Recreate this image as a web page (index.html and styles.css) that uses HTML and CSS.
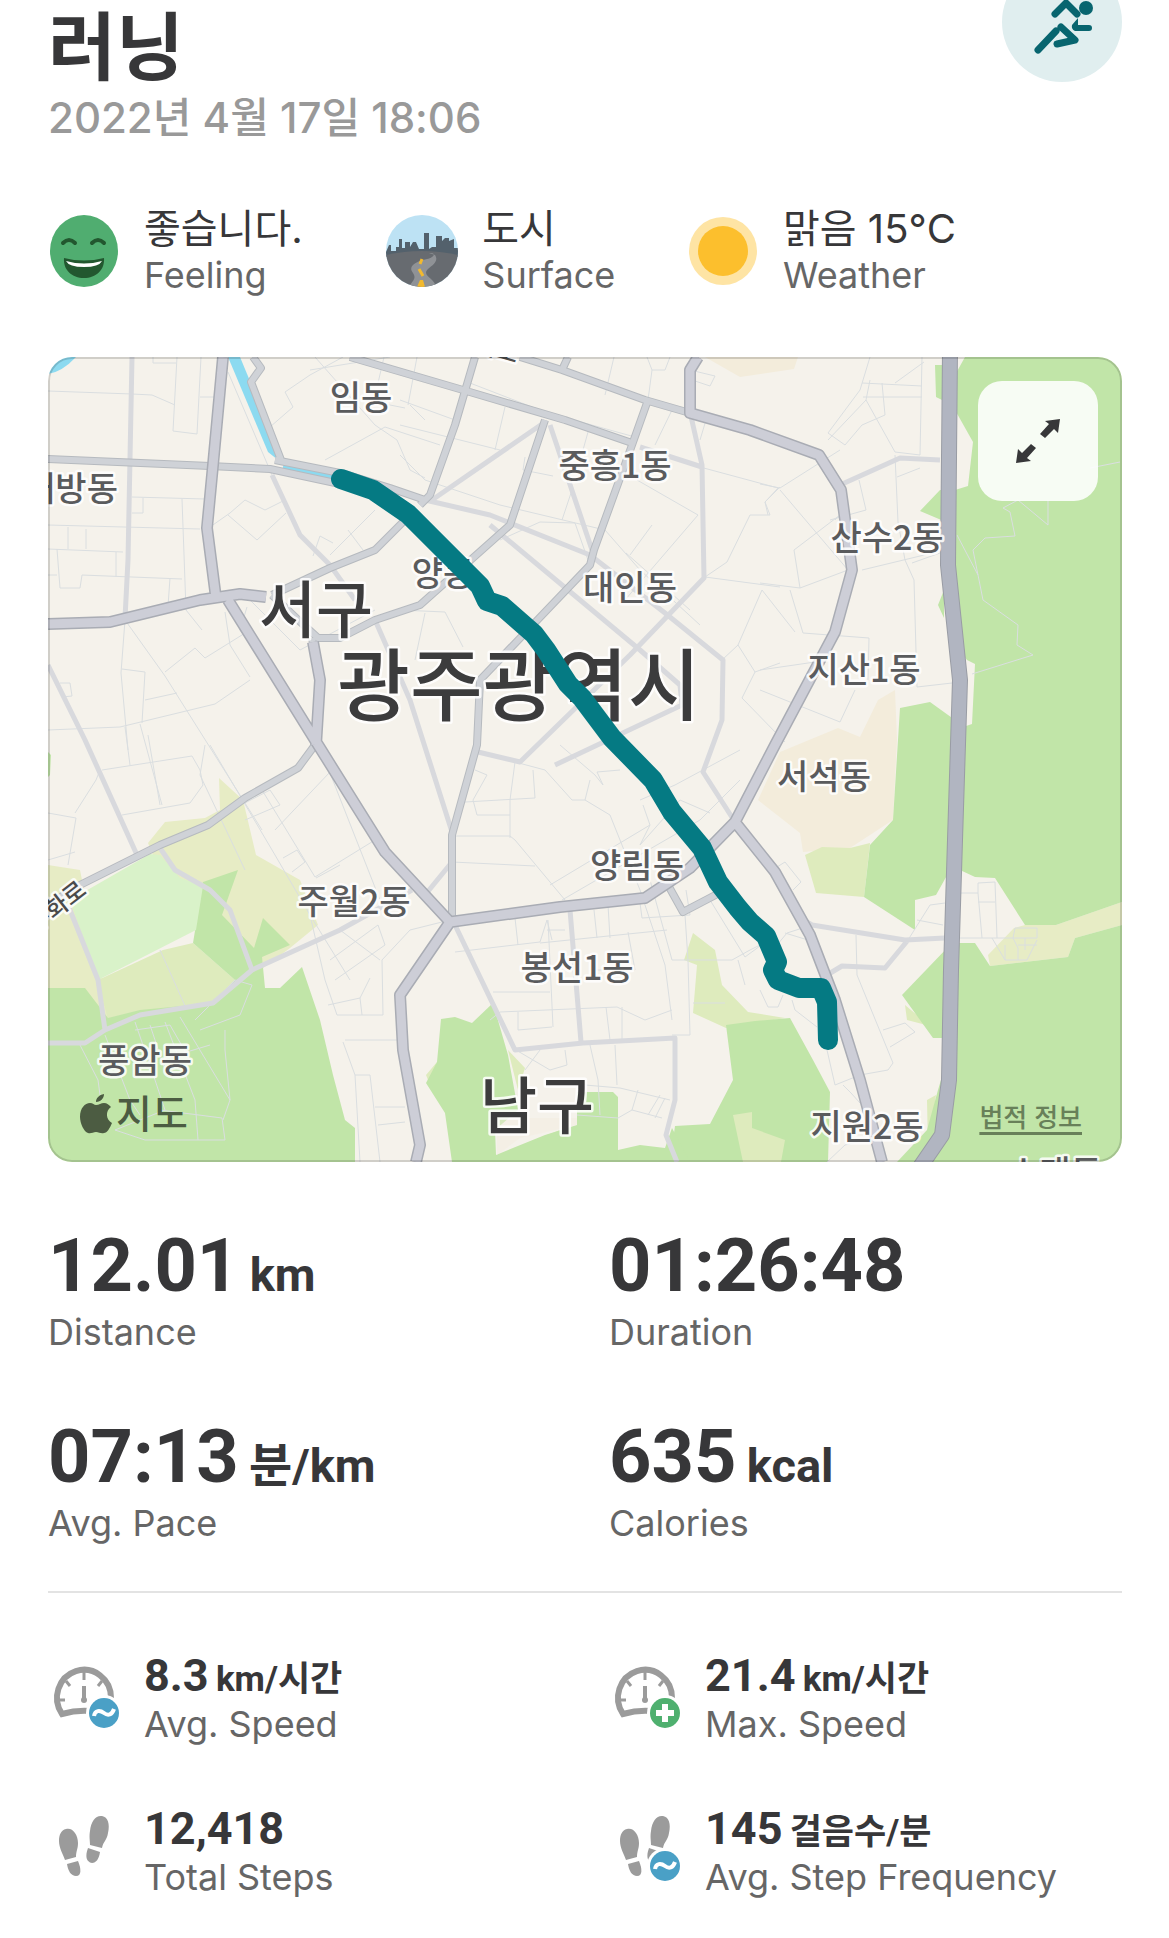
FILE: index.html
```
<!DOCTYPE html>
<html lang="ko">
<head>
    <meta charset="UTF-8">
    <meta name="viewport" content="width=device-width, initial-scale=1.0">
    <title>러닝</title>
    <link rel="stylesheet" href="styles.css">
</head>
<body>
    <!-- Shared icons -->
    <svg class="sprite" aria-hidden="true">
        <symbol id="icon-gauge" viewBox="0 0 72 72">
            <path d="M63 36A27 28 0 1 0 14 52q14-4 28-3" fill="none" stroke="#9b9b9b" stroke-width="6"/>
            <path d="M36 10v8M9 38h8M18 19l4 5M54 19l-4 5" stroke="#9b9b9b" stroke-width="3" fill="none"/>
            <path d="M36 24v14" stroke="#9b9b9b" stroke-width="4"/>
            <circle cx="36" cy="38" r="3" fill="#9b9b9b"/>
        </symbol>
        <symbol id="icon-steps" viewBox="0 0 72 72">
            <g fill="#9b9b9b">
                <path d="M18 14c6-2 12 5 12 14 0 6-2 8-2 14l-11 3c-2-6-6-12-6-19 0-6 2-11 7-12z"/>
                <path d="M19 49l11-3c3 7 4 15-2 15-5 0-8-5-9-12z"/>
                <path d="M54 1c6 1 8 8 6 17-1 7-5 9-6 15l-12-3c0-5-1-8 0-14C43 6 48 0 54 1z"/>
                <path d="M40 33l12 4c-1 7-4 11-8 11-6-1-7-7-4-15z"/>
            </g>
        </symbol>
        <symbol id="badge-avg" viewBox="0 0 36 36">
            <circle cx="18" cy="18" r="18" fill="#fff"/>
            <circle cx="18" cy="18" r="15" fill="#4aa0c6"/>
            <path d="M8 21c1-6 6-6 10-3s8 2 10-4" fill="none" stroke="#fff" stroke-width="4"/>
        </symbol>
        <symbol id="badge-max" viewBox="0 0 36 36">
            <circle cx="18" cy="18" r="18" fill="#fff"/>
            <circle cx="18" cy="18" r="15" fill="#4fb06f"/>
            <path d="M18 9v18M9 18h18" stroke="#fff" stroke-width="6"/>
        </symbol>
    </svg>

    <main class="container">
        <header class="header">
            <div class="heading">
                <h1>러닝</h1>
                <p class="date">2022년 4월 17일 18:06</p>
            </div>
            <div class="activity">
                <svg viewBox="0 0 120 120" aria-hidden="true">
                    <circle cx="84" cy="46" r="7" fill="#08656f"/>
                    <path d="M53 52l11-11 11 11M54 69L36 88M59 65l14 13-18 4" fill="none" stroke="#08656f" stroke-width="7" stroke-linecap="round" stroke-linejoin="round"/>
                    <path d="M76 56v7h11a3 3 0 0 1 0 6H73q-4-2-3-6z" fill="#08656f"/>
                </svg>
            </div>
        </header>

        <section class="conditions">
            <div class="item">
                <svg class="icon" viewBox="0 0 72 72" aria-hidden="true">
                    <ellipse cx="36" cy="36" rx="34" ry="36" fill="#50ad70"/>
                    <path d="M15 28q6-6 12 0M44 28q6-6 12 0" fill="none" stroke="#22572f" stroke-width="4" stroke-linecap="round"/>
                    <path d="M16 43q20 5 40 0c1 12-8 20-20 20s-21-8-20-20z" fill="#22572f"/>
                    <path d="M18 46q18 5 36 0-3 6-18 6t-18-6z" fill="#fff"/>
                </svg>
                <div>
                    <p class="item-title">좋습니다.</p>
                    <p class="caption">Feeling</p>
                </div>
            </div>
            <div class="item">
                <svg class="icon" viewBox="0 0 72 72" aria-hidden="true">
                    <clipPath id="round"><circle cx="36" cy="36" r="36"/></clipPath>
                    <g clip-path="url(#round)">
                        <path d="M0 0h72v72H0z" fill="#bde2f4"/>
                        <path d="M0 42V37L3 30H5V36H10V32H13V24H16V33H19V27H24V32L27 27H30L33 34H38V18H43V34L46 32V32H50V21H56V26L59 23H63V26L68 24V33H72V42z" fill="#53616c"/>
                        <path d="M0 40q36-8 72 0v32H0z" fill="#676b70"/>
                        <path d="M43 38c8-1 5 5-2 6-10 2-20 7-14 14 4 6-1 8-4 14h27c-1-9-15-11-8-18 5-4 11-8 7-14z" fill="#8f9296"/>
                        <path d="M36 44l-2 5M33 54l4 7" stroke="#f2b92e" stroke-width="3"/>
                        <path d="M34 65h3l2 7h-8z" fill="#f2b92e"/>
                    </g>
                </svg>
                <div>
                    <p class="item-title">도시</p>
                    <p class="caption">Surface</p>
                </div>
            </div>
            <div class="item">
                <svg class="icon" viewBox="0 0 72 72" aria-hidden="true">
                    <circle cx="36" cy="36" r="34" fill="#fee4a4"/>
                    <circle cx="36" cy="36" r="25" fill="#fcbf2d"/>
                </svg>
                <div>
                    <p class="item-title">맑음 15°C</p>
                    <p class="caption">Weather</p>
                </div>
            </div>
        </section>

        <section class="map">
            <svg class="map-canvas" viewBox="48 357 1074 805" role="img" aria-label="광주광역시">
                <rect x="48" y="357" width="1074" height="805" fill="#f5f2eb"/>

                <!-- Land use -->
                <g class="sand">
                    <path d="M895 690L878 700 860 737 838 728 780 752 758 800 800 833 803 852 850 848 893 820 897 740z"/>
                    <path d="M705 357H798L794 369 740 377z"/>
                </g>
                <g class="meadow">
                    <path d="M219 778L243 800 256 855 300 880 318 925 290 948 240 985 180 890 155 860 148 843 165 822 205 818 220 810z"/>
                    <path d="M48 865L80 870 110 1020 48 1045z"/>
                    <path d="M1025 925L1056 925 1122 902V925L1075 938 1068 957 990 966 988 955 1014 928z"/>
                </g>
                <g class="lime">
                    <path d="M98 980L163 950 193 943 235 980 213 1003 108 1020z"/>
                    <path d="M805 855L822 847 850 848 870 843 864 897 816 893z"/>
                    <path d="M693 933L715 950 722 985 748 1012 785 1018 726 1028 693 1013 697 965 684 960z"/>
                    <path d="M437 1062L426 1075 430 1085zM508 1050L525 1068 518 1090zM527 1143L560 1130 540 1155zM905 1005L907 1020 930 1026zM927 1100L936 1095 928 1150z"/>
                </g>
                <g class="wood">
                    <path d="M965 357H1122V902L1056 925H1025L995 878 975 877 960 870V728L972 724 975 664 967 660 955 645V490L968 486 973 442 955 410V375z"/>
                    <path d="M955 943H975L990 966 1068 957 1075 938 1122 925V1162H897L927 1130 938 1090 950 1050z"/>
                    <path d="M900 708L930 702 955 720 950 870 936 895 915 900V930L864 897 870 845 893 820z"/>
                    <path d="M950 945L902 995 933 1038H945zM935 365H942V400L936 397zM920 511L940 490H946V522zM938 605L944 590V618z"/>
                    <path d="M726 1025L755 1021 790 1018 813 1060 830 1092 828 1162H670L675 1126 710 1124 733 1080z"/>
                    <path d="M493 1003L508 1055 518 1110 495 1130 496 1155 545 1135 577 1125V1092H613L618 1097V1150L640 1145 665 1148 672 1128 690 1162H452L445 1113 426 1083 437 1062 441 1019 455 1017 472 1023z"/>
                    <path d="M48 988H85L108 1018 140 1010 213 1003 235 980 193 943 203 882 238 870 222 915 254 948 263 918 290 945 262 957 265 988H280L302 967 320 1020 333 1075 345 1120 355 1128V1162H48zM48 752L51 755 50 775 48 777z"/>
                </g>
                <path class="sand" d="M497 1118H577V1125L520 1138 497 1155z" fill-opacity="0.4"/>
                <path class="lime" d="M733 1115L752 1112V1128L785 1140 781 1162H743z"/>
                <path d="M70 900L150 854 160 855 180 878 203 886 196 930 98 980z" fill="#d9f2c9"/>

                <!-- River -->
                <path d="M228 357H240L262 410 278 460 268 452z" fill="#8cdaf0"/>
                <path d="M283 467L340 478" stroke="#8cdaf0" stroke-width="6"/>
                <path d="M48 374Q62 372 76 357H60L48 364z" fill="#8cdaf0"/>

                <!-- Side streets -->
                <path class="lane" d="M48 391L132 394 152 395 175 405M177 357L173 431 197 434 201 357M153 357V363H176M200 397H215M228 372L272 475M132 497L205 499M143 498V513H132M182 499L186 610 202 630M48 525L200 529M68 527V549M86 529V549M48 549L123 552M57 549L60 588H80L82 575 182 579M48 575L57 575M170 578L168 606M116 552V577M125 620L121 673 128 750M125 620L165 676 262 830M122 669L145 672 142 723M165 672L195 648 205 658 250 630M60 683H70L72 696 62 697M48 730L120 727 215 704 250 680M145 700L177 693M225 612L230 645 250 677M140 724L162 805M247 607L240 630 295 705M250 600L300 650 375 610M210 527L230 513 245 500 265 510 285 500M228 515L257 540 286 513M313 556L320 536 333 543M348 530L363 550"/>
                <path class="lane" d="M270 427L293 407 285 392 310 375 343 357M310 370L390 357M315 357L375 425 397 440 410 470 425 478M330 555L348 537 375 510M325 460L385 427 440 445M384 357L378 383M365 400L405 408M410 405L425 420"/>
                <path class="lane" d="M417 357L408 405M400 400L455 420M470 383L545 412 635 437M505 407L495 450M400 425L500 450M400 455L425 480 500 505 605 530 640 570 700 625M525 457L523 470 553 476M588 432L583 450M562 520L572 490M500 540L540 522 575 523 588 560M614 357L605 395M647 357L652 370 648 400M652 370H665L670 357M672 410L655 445M690 370L715 376 710 386 692 380M706 420L700 440M637 480L698 515 625 600M700 467L778 488 765 502 770 515H750L727 562 705 577 780 587M626 553L690 610M652 525L630 555M762 590L738 645 755 672 780 663M762 590L795 632M738 645L722 660M755 672L742 698 778 735 785 742M400 610L445 612 463 647M425 613L415 660"/>
                <path class="lane" d="M870 357L860 390 828 433 845 445 862 425 885 415 882 383M862 383L922 386M895 383L924 362M863 397H922M922 357L920 455 895 452 866 400 870 380M866 400L828 440M760 484L780 488 840 450M780 490L848 570 800 588 794 550 840 515 835 520M859 480L866 510 830 520M895 455L898 522 905 560 914 580 917 687 952 683M862 570L945 550M780 487L765 502 768 515M790 590L803 633 869 638 868 680M800 588L760 583M760 670L815 662M760 690L840 722 855 690M897 477L920 468M912 563L940 553"/>
                <path class="lane" d="M957 535L978 575 983 600 1018 625 1017 645 1033 655 972 674M978 575L973 550 985 538 1015 536 1010 512 1003 508 1018 500 1048 525V500M1090 468L1120 462"/>
                <path class="lane" d="M75 813L96 780 100 770M48 813L76 818 68 865M102 770L192 756 200 770 203 785 190 803 122 815M125 727L130 765M148 735L160 805M205 745L200 775 245 870M210 745L275 855 310 915 350 980M245 803L270 790 280 805 245 820M275 830L330 772M262 790L315 877 375 840M283 858L297 850 305 862 292 872M316 878L340 865M330 773L380 900M310 915L325 980 337 1015H383L382 960 410 930 450 920M330 960L378 925 385 945 335 980M340 930L380 960M328 1005L360 998 370 978M360 998L362 1015M345 1040H400M343 1042L355 1075 360 1162M355 1075H370L380 1162M375 1107H405M378 1125L405 1122"/>
                <path class="lane" d="M135 1022L155 1080 165 1110 115 1130 145 1140H225L222 1118 160 1110M165 1022L195 1100 198 1140M180 1017L230 1100 223 1120M200 1030L240 1015 252 985 235 980 195 1020M225 1030V1050L230 1100M135 1030L170 1025 190 1060M80 1045L98 1080 100 1095M105 1035L130 1100 140 1115M150 1025L165 1070M160 1060L210 1045M160 950L186 1008M48 860L75 852"/>
                <path class="lane" d="M452 836H510L515 840 565 900M452 862L535 866M510 838V800L515 762 545 770 572 800 585 800 610 815 640 890 665 965 672 1020M465 802L535 798 533 770M475 770L487 775 473 800 477 815H510M560 745L595 775 603 785 597 772 620 770M585 800L590 780M550 885L650 825 640 845 680 800 710 813M562 900L700 820 740 780M643 805L650 825M640 800L675 785 740 750M455 952L540 942 547 920 552 940M547 930H565M515 918L518 945M548 920L553 1027M594 910L597 938M608 905L610 938M628 932L635 970H590M540 943L667 930M640 903L642 918 690 915 686 890M493 992H550M490 1020L500 1012 617 1007 645 1020 672 1010M518 1012V1030L552 1027M606 1007L610 1040M622 1007V1040M650 880L672 960H732L750 950 770 940M685 915L688 960 690 1035H672M693 1003H725M738 960L745 985M710 900L745 957 775 935M516 1050L550 1070 567 1065 565 1050M540 1050L525 1070M590 1045L598 1080 600 1115M615 1045L617 1085M585 1085L620 1088 670 1100M632 1110L638 1090M648 1115L660 1095M655 1118L665 1098M577 1115L618 1118 632 1110 662 1118"/>
                <path class="lane" d="M777 867L785 862 801 882 793 890M777 945L787 933 812 925M785 933L808 940 825 975 827 1050 835 1085 860 1075 888 1070 893 1063 857 975 856 935M792 1000L795 1010 817 1027M883 1030L905 1023 915 1032 890 1047M827 1162L845 1145 865 1140M843 1085L851 1093 860 1103M760 990L768 1007H778L783 995M908 940L930 905 945 903M917 920L943 925M960 893H978V883L995 882 997 938M978 893L982 938M978 902H995M958 938H1037V928H1015L1013 938M992 938L1005 960H1027L1037 940M1005 945V960M1013 938L1018 948V960M1025 938V950M1018 945L1037 945"/>

                <!-- Minor roads -->
                <path class="minor" d="M132 357L128 560 125 618M48 665L85 740 137 855M272 475L300 535 330 565 355 600M375 620L410 700 452 832M432 500L545 422M550 425L592 550M425 500L490 515 590 555 665 613 723 660 722 720 703 772 735 822M490 525L640 650 680 685 682 705 555 765M690 412L702 465 704 578 630 655 520 762 478 752M640 447L702 467M840 485L900 458 940 460M455 925L515 1050 583 1043 675 1038V1100L666 1135 677 1162M570 910L581 1042M452 862L425 895M412 890L340 930 252 970 213 1003 140 1015 105 1030 85 1043 48 1043M158 845L175 870 210 890 230 910 252 970M68 905L98 980 105 1030M800 918L812 925 905 940 945 938M827 975L842 966 885 968 908 940"/>

                <!-- Main roads, casing below fill -->
                <g class="main-case">
                    <path d="M48 459L210 466 270 469 340 484M275 460L345 474 390 488 425 500M253 357L261 368 251 382 281 460M350 357L463 390 565 420 632 443M475 357L455 425 430 495 420 505M545 420L510 525 420 605 375 620 340 638H318L295 617 272 595M410 515L375 550 330 568 272 595M520 357L562 370 645 400 690 413M568 357L562 370M648 400L632 445 594 550 590 565 480 680 477 745 452 835V920M312 638L320 680 315 745 298 768 245 798 208 825 160 845 80 885 48 905M668 885L683 912 725 890"/>
                </g>
                <g class="main-fill">
                    <path d="M48 459L210 466 270 469 340 484M275 460L345 474 390 488 425 500M253 357L261 368 251 382 281 460M350 357L463 390 565 420 632 443M475 357L455 425 430 495 420 505M545 420L510 525 420 605 375 620 340 638H318L295 617 272 595M410 515L375 550 330 568 272 595M520 357L562 370 645 400 690 413M568 357L562 370M648 400L632 445 594 550 590 565 480 680 477 745 452 835V920M312 638L320 680 315 745 298 768 245 798 208 825 160 845 80 885 48 905M668 885L683 912 725 890"/>
                </g>
                <g class="trunk-case">
                    <path d="M223 357L213 465 207 528 216 598M48 624L110 622 200 600 240 594 266 597M228 600L315 740 385 852 450 922 400 995 403 1050 420 1145 416 1162M450 922L560 907 645 898 690 868 735 822 775 745 835 632 852 570 841 490 819 455 750 430 690 413V370L698 357M735 822L775 872 810 935 835 1000 860 1080 882 1162M313 642L320 680 316 745"/>
                </g>
                <g class="trunk-fill">
                    <path d="M223 357L213 465 207 528 216 598M48 624L110 622 200 600 240 594 266 597M228 600L315 740 385 852 450 922 400 995 403 1050 420 1145 416 1162M450 922L560 907 645 898 690 868 735 822 775 745 835 632 852 570 841 490 819 455 750 430 690 413V370L698 357M735 822L775 872 810 935 835 1000 860 1080 882 1162M313 642L320 680 316 745"/>
                </g>
                <g class="highway">
                    <path class="highway-case" d="M950 350L948 565 960 680 955 840 951 970 949 1080 942 1135 918 1170"/>
                    <path class="highway-fill" d="M950 350L948 565 960 680 955 840 951 970 949 1080 942 1135 918 1170"/>
                </g>

                <!-- Place names -->
                <g class="place">
                    <text x="361" y="410">임동</text>
                    <text x="615" y="478">중흥1동</text>
                    <text x="71" y="501">내방동</text>
                    <text x="443" y="586">양동</text>
                    <text x="630" y="600">대인동</text>
                    <text x="887" y="550">산수2동</text>
                    <text x="864" y="682">지산1동</text>
                    <text x="824" y="789">서석동</text>
                    <text x="637" y="878">양림동</text>
                    <text x="354" y="914">주월2동</text>
                    <text x="577" y="980">봉선1동</text>
                    <text x="145" y="1073">풍암동</text>
                    <text x="867" y="1139">지원2동</text>
                    <text x="1055" y="1185">소태동</text>
                </g>
                <g class="road-name">
                    <text transform="translate(88 893) rotate(-38)">상무화로</text>
                    <text transform="translate(516 363) rotate(16)">서로</text>
                </g>
                <g class="district">
                    <text x="316" y="633">서구</text>
                    <text x="537" y="1129">남구</text>
                </g>
                <text class="city" x="519" y="715">광주광역시</text>

                <path class="route" d="M341 479L373 490 408 514 440 546 480 586 487 601 502 606 534 634 546 650 568 684 582 698 612 738 653 780 672 812 702 848 718 882 738 908 750 922 766 936 777 962 773 970 778 980 799 988 821 988 827 1002 828 1040"/>
            </svg>
            <span class="map-brand">
                <svg viewBox="0 0 32 40" aria-hidden="true">
                    <path d="M16 11c3 0 5-2 8-2s5 2 7 4c-6 4-5 13 1 16-2 5-5 10-8 10-3 1-5-1-8-1s-5 2-8 1C4 38 0 29 0 23 0 14 5 9 10 9c3 0 4 2 6 2zM16 8c0-4 3-7 8-8 0 4-3 8-8 8z"/>
                </svg>
                지도
            </span>
            <a class="map-legal" href="#">법적 정보</a>
            <button class="map-expand" type="button" aria-label="지도 확대">
                <svg viewBox="0 0 44 44" aria-hidden="true">
                    <path d="M44 0l-2 14-4-4-9 9-5-4 9-10-4-3zM0 44l2-14 4 4 9-9 5 4-9 10 4 3z"/>
                </svg>
            </button>
        </section>

        <section class="stats">
            <div>
                <p class="stat-value">12.01 <small>km</small></p>
                <p class="caption">Distance</p>
            </div>
            <div>
                <p class="stat-value">01:26:48</p>
                <p class="caption">Duration</p>
            </div>
            <div>
                <p class="stat-value">07:13 <small>분/km</small></p>
                <p class="caption">Avg. Pace</p>
            </div>
            <div>
                <p class="stat-value">635 <small>kcal</small></p>
                <p class="caption">Calories</p>
            </div>
        </section>

        <section class="details">
            <div class="item">
                <div class="icon">
                    <svg class="icon"><use href="#icon-gauge"/></svg>
                    <svg class="badge"><use href="#badge-avg"/></svg>
                </div>
                <div>
                    <p class="detail-value">8.3 <small>km/시간</small></p>
                    <p class="caption">Avg. Speed</p>
                </div>
            </div>
            <div class="item">
                <div class="icon">
                    <svg class="icon"><use href="#icon-gauge"/></svg>
                    <svg class="badge"><use href="#badge-max"/></svg>
                </div>
                <div>
                    <p class="detail-value">21.4 <small>km/시간</small></p>
                    <p class="caption">Max. Speed</p>
                </div>
            </div>
            <div class="item">
                <div class="icon">
                    <svg class="icon"><use href="#icon-steps"/></svg>
                </div>
                <div>
                    <p class="detail-value">12,418</p>
                    <p class="caption">Total Steps</p>
                </div>
            </div>
            <div class="item">
                <div class="icon">
                    <svg class="icon"><use href="#icon-steps"/></svg>
                    <svg class="badge"><use href="#badge-avg"/></svg>
                </div>
                <div>
                    <p class="detail-value">145 <small>걸음수/분</small></p>
                    <p class="caption">Avg. Step Frequency</p>
                </div>
            </div>
        </section>
    </main>
</body>
</html>
```

FILE: styles.css
```
/* General Styles */
* {
    box-sizing: border-box;
}

body {
    font-family: Inter, "Noto Sans CJK KR", sans-serif;
    background-color: #ffffff;
    color: #373739;
    margin: 0;
}

h1, p {
    margin: 0;
}

small {
    line-height: 1;
}

.sprite {
    display: none;
}

.container {
    padding: 0 47px 24px 48px;
}

/* Header */
.header {
    display: flex;
    justify-content: space-between;
    align-items: flex-start;
}

h1 {
    font-family: "Noto Sans CJK KR", sans-serif;
    font-size: 74px;
    font-weight: 700;
    line-height: 84px;
}

.date {
    margin-top: 4px;
    font-size: 42px;
    font-weight: 500;
    line-height: 60px;
    color: #999999;
}

.activity {
    width: 120px;
    height: 120px;
    margin-top: -38px;
    border-radius: 50%;
    background-color: #e0eeef;
}

/* Icon + two lines of text */
.item {
    display: flex;
    align-items: center;
    gap: 24px;
}

.icon {
    position: relative;
    display: block;
    flex: none;
    width: 72px;
    height: 72px;
}

.caption {
    font-size: 36px;
    line-height: 44px;
    color: #666666;
}

.conditions {
    display: grid;
    grid-template-columns: 63fr 56fr 81fr;
    margin-top: 56px;
}

.item-title {
    font-size: 40px;
    line-height: 49px;
}

/* Map */
.map {
    position: relative;
    margin-top: 60px;
    border-radius: 24px;
    overflow: hidden;
}

.map::after {
    content: "";
    position: absolute;
    inset: 0;
    border: 2px solid rgba(0, 0, 0, 0.15);
    border-radius: 24px;
    pointer-events: none;
}

.map-canvas {
    display: block;
    width: 100%;
    font-family: "Noto Sans CJK KR", sans-serif;
}

.map-canvas text {
    font-weight: 500;
    text-anchor: middle;
    paint-order: stroke;
    stroke: rgba(255, 255, 255, 0.85);
    stroke-width: 5px;
    stroke-linejoin: round;
}

.sand { fill: #f3ecdb; }
.meadow { fill: #e7ecc5; }
.lime { fill: #deebbd; }
.wood { fill: #c1e5a8; }

.lane,
.minor,
.main-case,
.main-fill,
.trunk-case,
.trunk-fill,
.highway,
.route {
    fill: none;
    stroke-linejoin: round;
}

.lane {
    stroke: #dadee0;
    stroke-width: 1px;
}

.minor {
    stroke: #d8d9dd;
    stroke-width: 5px;
}

.main-case {
    stroke: #b6babf;
    stroke-width: 8px;
}

.main-fill {
    stroke: #cfd2d7;
    stroke-width: 6px;
}

.trunk-case {
    stroke: #a9acb4;
    stroke-width: 12px;
}

.trunk-fill {
    stroke: #cdced7;
    stroke-width: 9px;
}

.highway-case {
    stroke: #999ca4;
    stroke-width: 16px;
}

.highway-fill {
    stroke: #b1b5c1;
    stroke-width: 14px;
}

.route {
    stroke: #057a83;
    stroke-width: 20px;
    stroke-linecap: round;
}

.place {
    font-size: 34px;
    fill: #5a5b5d;
}

.road-name {
    font-size: 24px;
    fill: #4b4b4b;
}

.map-canvas .road-name text {
    text-anchor: end;
}

.district {
    font-size: 62px;
    fill: #3c3c3d;
}

.city {
    font-size: 79px;
    fill: #3c3c3d;
}

.map-brand {
    position: absolute;
    left: 32px;
    bottom: 22px;
    display: flex;
    align-items: center;
    gap: 4px;
    font-size: 39px;
    font-weight: 500;
    line-height: 52px;
    color: #4c5c42;
}

.map-brand svg {
    width: 32px;
    height: 40px;
    fill: currentColor;
}

.map-legal {
    position: absolute;
    right: 40px;
    bottom: 26px;
    font-size: 26px;
    font-weight: 500;
    line-height: 36px;
    color: #688059;
    text-decoration-thickness: 3px;
    text-underline-offset: 5px;
}

.map-expand {
    position: absolute;
    top: 24px;
    right: 24px;
    display: flex;
    justify-content: center;
    align-items: center;
    width: 120px;
    height: 120px;
    padding: 0;
    border: none;
    border-radius: 24px;
    background-color: rgba(255, 255, 255, 0.87);
    cursor: pointer;
}

.map-expand svg {
    width: 44px;
    height: 44px;
    fill: #373739;
}

/* Main stats */
.stats {
    display: grid;
    grid-template-columns: 1fr 1fr;
    gap: 59px 48px;
    padding: 60px 0 46px;
    border-bottom: 2px solid #e3e3e3;
}

.stat-value,
.detail-value {
    font-family: Roboto, "Noto Sans CJK KR", sans-serif;
    font-weight: 700;
}

.stat-value {
    font-size: 74px;
    line-height: 88px;
}

.stat-value small {
    font-size: 47px;
    margin-left: -8px;
}

/* Secondary stats */
.details {
    display: grid;
    grid-template-columns: 1fr 1fr;
    gap: 56px 48px;
    padding-top: 56px;
}

.detail-value {
    font-size: 45px;
    line-height: 53px;
}

.detail-value small {
    font-size: 35px;
    margin-left: -4px;
}

.badge {
    position: absolute;
    right: -2px;
    bottom: 3px;
    width: 36px;
    height: 36px;
}
```
